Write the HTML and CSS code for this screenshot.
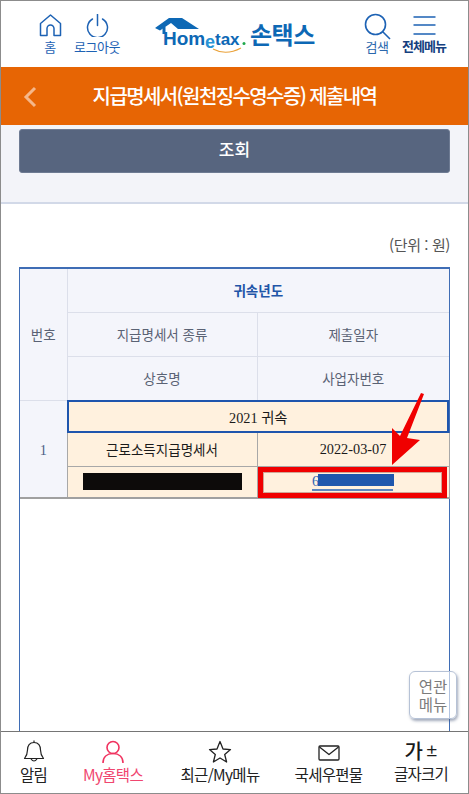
FILE: index.html
```html
<!DOCTYPE html>
<html lang="ko">
<head>
    <meta charset="UTF-8">
    <meta name="viewport" content="width=device-width, initial-scale=1.0">
    <title>지급명세서(원천징수영수증) 제출내역 - 손택스</title>
    <link rel="stylesheet" href="styles.css">
</head>
<body>
    <div class="page">
        <header class="top-bar">
            <a class="top-link link-home">
                <svg width="23" height="23" viewBox="0 0 23 23" fill="none" stroke="#1d62b4" stroke-width="1.5" stroke-linejoin="round"><path d="M1.500 9.500 11.500 1l10 8.500V21.500h-6.500v-7a3.500 3.500 0 0 0-7 0v7H1.500z"/></svg>
                <span>홈</span>
            </a>
            <a class="top-link link-logout">
                <svg width="23" height="23" viewBox="0 0 23 23" fill="none" stroke="#1d62b4" stroke-width="1.5" stroke-linecap="round"><path d="M6.500 5a10 10 0 1 0 10 0"/><path d="M11.500 0.500v11"/></svg>
                <span>로그아웃</span>
            </a>
            <div class="logo">
                <svg class="logo-mark" width="95" height="40" viewBox="0 0 95 40">
                    <path d="M1 10 15 0H28L45 11H24L17 5 6 12.500z" fill="#0d68b5"/>
                    <path d="M8.500 9h3v7h-3z" fill="#0d68b5"/>
                    <text x="9" y="27" class="logo-word">Hom</text>
                    <text x="51" y="30" class="logo-e">e</text>
                    <text x="61" y="27" class="logo-tax">tax</text>
                    <circle cx="90" cy="25.500" r="1.500" fill="#1fa84a"/>
                    <path d="M59 31q13 7 28-1" fill="none" stroke="#eaa23a" stroke-width="1.200"/>
                </svg>
                <span class="logo-name">손택스</span>
            </div>
            <a class="top-link link-search">
                <svg width="27" height="27" viewBox="0 0 27 27" fill="none" stroke="#1d62b4" stroke-width="1.600"><circle cx="11.500" cy="11.500" r="10"/><path d="M18.500 18.500 26 26"/></svg>
                <span>검색</span>
            </a>
            <a class="top-link link-menu">
                <svg width="23" height="23" viewBox="0 0 23 23" fill="none" stroke="#1d62b4" stroke-width="1.600"><path d="M0.500 2h22M0.500 10h22M0.500 19h22"/></svg>
                <span>전체메뉴</span>
            </a>
        </header>

        <div class="title-bar">
            <svg class="back" width="14" height="22" viewBox="0 0 14 22" fill="none" stroke="#f5b78a" stroke-width="3"><path d="M12 2 3 11l9 9"/></svg>
            <h1>지급명세서(원천징수영수증) 제출내역</h1>
        </div>

        <section class="search-box">
            <button type="button" class="btn-search">조회</button>
        </section>

        <main class="content">
            <p class="unit">(단위 : 원)</p>
            <div class="table-wrap">
                <table class="list">
                    <colgroup>
                        <col class="col-no">
                        <col class="col-a">
                        <col class="col-b">
                    </colgroup>
                    <thead>
                        <tr class="row-first">
                            <th rowspan="3">번호</th>
                            <th colspan="2" class="th-main">귀속년도</th>
                        </tr>
                        <tr>
                            <th>지급명세서 종류</th>
                            <th>제출일자</th>
                        </tr>
                        <tr>
                            <th>상호명</th>
                            <th>사업자번호</th>
                        </tr>
                    </thead>
                    <tbody>
                        <tr class="row-year">
                            <td rowspan="3" class="num">1</td>
                            <td colspan="2" class="year">2021 귀속</td>
                        </tr>
                        <tr class="row-mid">
                            <td class="hl">근로소득지급명세서</td>
                            <td class="hl">2022-03-07</td>
                        </tr>
                        <tr class="row-last">
                            <td class="hl"><span class="mask"></span></td>
                            <td class="hl biz"><a class="biz-link">6<span class="biz-mask"></span></a></td>
                        </tr>
                    </tbody>
                </table>

                <svg class="arrow" width="50" height="76" viewBox="0 0 50 76">
                    <path d="M31 1 34 2 17 46 30 48 2 73V36L10 44z" fill="#f00000"/>
                </svg>
            </div>
            <a class="related">연관<br>메뉴</a>
        </main>

        <nav class="bottom-nav">
            <a class="nav-item item-alarm">
                <svg width="22" height="24" viewBox="0 0 22 24" fill="none" stroke="#222" stroke-width="1.200" stroke-linejoin="round"><path d="M11 2.500c-4.500 0-6.500 3-6.500 7.500 0 4-1 6-3 8.500h19c-2-2.500-3-4.500-3-8.500 0-4.500-2-7.500-6.500-7.500z"/><path d="M11 2.500V0.500"/><path d="M8 19q3 4 6 0"/></svg>
                <span>알림</span>
            </a>
            <a class="nav-item item-my">
                <svg width="22" height="24" viewBox="0 0 22 24" fill="none" stroke="#f0325f" stroke-width="1.600"><circle cx="11" cy="7.500" r="6"/><path d="M1 23c0-6 4-9.500 10-9.500S21 17 21 23"/></svg>
                <span>My홈택스</span>
            </a>
            <a class="nav-item item-recent">
                <svg width="24" height="24" viewBox="0 0 24 24" fill="none" stroke="#222" stroke-width="1.300" stroke-linejoin="round"><path d="M12 1.500 15 9l7.500.6-5.800 4.900 1.900 7.500L12 18l-6.600 4 1.900-7.500L1.500 9.600 9 9z"/></svg>
                <span>최근/My메뉴</span>
            </a>
            <a class="nav-item item-post">
                <svg width="22" height="24" viewBox="0 0 22 24" fill="none" stroke="#222" stroke-width="1.300" stroke-linejoin="round"><rect x="1" y="6" width="20" height="14" rx="1"/><path d="M1.500 7 11 14.500 20.500 7"/></svg>
                <span>국세우편물</span>
            </a>
            <a class="nav-item item-font">
                <div class="font-icon">가<small>±</small></div>
                <span>글자크기</span>
            </a>
        </nav>
    </div>
</body>
</html>
```

FILE: styles.css
```css
* {
    margin: 0;
    padding: 0;
    box-sizing: border-box;
}

body {
    font-family: "Noto Sans CJK KR", "Noto Sans", sans-serif;
    background-color: #ffffff;
    overflow: hidden;
}

.page {
    position: relative;
    display: flex;
    flex-direction: column;
    height: 794px;
    border: 1px solid #8c8c8c;
    overflow: hidden;
}

/* top bar */
.top-bar {
    display: flex;
    height: 66px;
    background-color: #ffffff;
}

.top-link {
    display: flex;
    flex-direction: column;
    align-items: center;
    color: #1d62b4;
    font-size: 13px;
    line-height: 14px;
    letter-spacing: -0.5px;
    white-space: nowrap;
}

.top-link span {
    margin-top: 3px;
}

.link-home {
    width: 22px;
    margin: 13px 0 0 38px;
}

.link-logout {
    width: 50px;
    margin: 13px 0 0 11px;
}

.link-search {
    width: 30px;
    margin: 12px 0 0 33px;
    color: #2a67ad;
}

.link-search span {
    margin-top: 0;
}

.link-menu {
    width: 50px;
    margin: 14px 0 0 7px;
    color: #15407f;
    font-weight: 700;
    letter-spacing: -0.9px;
}

.link-menu span {
    margin-top: 1px;
}

.logo {
    display: flex;
    width: 207px;
    padding: 17px 0 0 33px;
}

.logo-mark {
    flex-shrink: 0;
    margin-left: -1px;
}

.logo-word,
.logo-tax,
.logo-e {
    font-family: "Liberation Sans", sans-serif;
    font-weight: 700;
    fill: #0d68b5;
}

.logo-word {
    font-size: 19px;
}

.logo-tax {
    font-size: 17px;
}

.logo-e {
    font-size: 18px;
    fill: #2a93d5;
}

.logo-name {
    margin: 0 0 0 1px;
    color: #0d68b5;
    font-size: 24px;
    font-weight: 700;
    line-height: 32px;
    letter-spacing: -0.5px;
    white-space: nowrap;
}

/* orange title */
.title-bar {
    position: relative;
    display: flex;
    align-items: center;
    justify-content: center;
    height: 58px;
    padding-bottom: 2px;
    background-color: #e76504;
}

.title-bar h1 {
    color: #ffffff;
    font-size: 20px;
    font-weight: 500;
    letter-spacing: -1.600px;
}

.back {
    position: absolute;
    left: 22px;
    top: 19px;
}

/* search area */
.search-box {
    height: 79px;
    padding: 4px 18px 0;
    background-color: #f3f4f9;
    border-bottom: 2px solid #d2d9e8;
}

.btn-search {
    display: block;
    width: 431px;
    height: 44px;
    padding-bottom: 5px;
    background-color: #57657f;
    border: 1px solid #6e7b93;
    border-radius: 3px;
    color: #ffffff;
    font-family: inherit;
    font-size: 17px;
    font-weight: 500;
}

/* result table */
.content {
    display: flex;
    flex: 1;
    flex-direction: column;
    min-height: 0;
    padding: 0 18px;
}

.unit {
    margin-top: 30px;
    height: 33px;
    color: #555555;
    font-size: 15px;
    line-height: 22px;
    letter-spacing: -0.4px;
    text-align: right;
}

.table-wrap {
    position: relative;
    flex: 1;
    border: 1px solid #3f6db5;
    border-bottom: none;
    border-top-width: 2px;
}

.list {
    width: 429px;
    table-layout: fixed;
    border-collapse: collapse;
    font-size: 13px;
}

.col-no {
    width: 47px;
}

.col-a {
    width: 190px;
}

.col-b {
    width: 192px;
}

.list th {
    height: 44px;
    background-color: #f4f5fb;
    border: 1px solid #dcdfea;
    border-top: none;
    color: #5a6274;
    font-weight: 400;
    font-size: 13.500px;
}

.row-first th {
    height: 43px;
}

.list th:first-child {
    border-left: none;
}

.list th:last-child {
    border-right: none;
}

.list th.th-main {
    color: #1f55a8;
    font-weight: 700;
}

.list td {
    text-align: center;
    font-family: "Liberation Serif", "Noto Sans CJK KR", serif;
    font-size: 14.300px;
    color: #1a1a1a;
}

.list td.num {
    padding-top: 4px;
    background-color: #f4f5fb;
    border-right: 1px solid #a8a8a8;
    border-bottom: 2px solid #a0a0a0;
    color: #4d5f86;
}

.year {
    background-color: #fff1de;
    outline: 2px solid #1e55ad;
    outline-offset: -2px;
}

.row-year td {
    height: 33px;
}

.row-mid td {
    height: 33px;
}

.row-last td {
    height: 32px;
}

.hl {
    background-color: #fff1de;
    border-right: 1px solid #a8a8a8;
    border-bottom: 1px solid #a8a8a8;
}

.row-mid .hl:first-child {
    font-family: "Noto Sans CJK KR", sans-serif;
    font-size: 13.500px;
}

.row-last .hl {
    border-bottom: 2px solid #a0a0a0;
}

.mask {
    display: block;
    width: 159px;
    height: 17px;
    margin: 0 auto;
    background-color: #0d0b0a;
}

.biz {
    position: relative;
}

/* red highlight drawn over the cell */
.biz::after {
    content: "";
    position: absolute;
    left: 0;
    right: 2px;
    top: 0;
    bottom: -1px;
    border: 5px solid #f00000;
    outline: 1px solid rgba(120, 30, 20, 0.35);
    outline-offset: -6px;
}

.biz-link {
    display: inline-block;
    position: relative;
    width: 81px;
    height: 17px;
    margin-left: -1px;
    border-bottom: 2px solid #5b86c0;
    color: #2f63b4;
    line-height: 15px;
    text-align: left;
}

.biz-mask {
    position: absolute;
    left: 6px;
    top: 0;
    width: 76px;
    height: 12px;
    background-color: #1f57ad;
}

.arrow {
    position: absolute;
    left: 370px;
    top: 123px;
}

.related {
    position: absolute;
    left: 408px;
    top: 670px;
    width: 48px;
    height: 48px;
    padding-top: 5px;
    background-color: rgba(255, 255, 255, 0.6);
    border: 1px solid #b6c2d6;
    border-radius: 6px;
    box-shadow: 1px 2px 3px rgba(70, 85, 120, 0.5);
    color: #7c7c7c;
    font-size: 15.500px;
    line-height: 18px;
    text-align: center;
}

/* bottom nav */
.bottom-nav {
    display: flex;
    height: 62px;
    background-color: #ffffff;
    border-top: 1px solid #757575;
}

.nav-item {
    display: flex;
    flex-direction: column;
    align-items: center;
    padding-top: 8px;
    color: #222222;
    font-size: 15.500px;
    line-height: 20px;
    letter-spacing: -0.7px;
    white-space: nowrap;
}

.item-alarm {
    width: 65px;
}

.item-my {
    width: 94px;
    color: #f0466f;
}

.item-recent {
    width: 120px;
}

.item-post {
    width: 97px;
}

.item-font {
    width: 88px;
}

.font-icon {
    height: 24px;
    margin-top: -1px;
    color: #1a1a1a;
    font-size: 20px;
    font-weight: 500;
    line-height: 24px;
}

.font-icon small {
    margin-left: 3px;
    font-size: 13px;
    font-weight: 700;
    vertical-align: 3px;
}
```
